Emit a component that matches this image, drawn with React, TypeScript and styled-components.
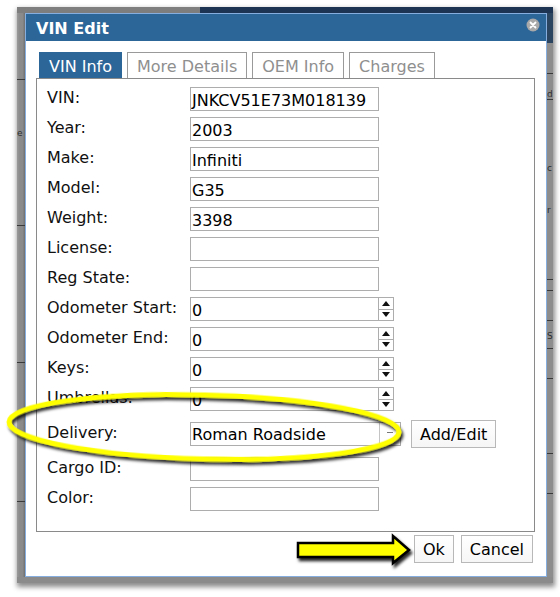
import React from "react";
import styled, { createGlobalStyle } from "styled-components";

const GlobalStyle = createGlobalStyle`
  html, body {
    margin: 0;
    padding: 0;
    background: #fff;
  }
  body {
    font-family: "DejaVu Sans", Verdana, sans-serif;
  }
`;

const Canvas = styled.div`
  position: relative;
  width: 560px;
  height: 597px;
  overflow: hidden;
  padding: 7px 0 0 17px;
  box-sizing: border-box;
`;

// the screenshot of the page behind the dialog (greyed by the modal overlay)
const Shot = styled.div`
  width: 536px;
  height: 576px;
  background: #8b8b8b;
  box-shadow: 1px 3px 5px 1px rgba(0, 0, 0, 0.45);
  display: grid;
  grid-template-columns: 8px 1fr 6px;
  grid-template-rows: 6px 1fr 6px;
`;

const TopStrip = styled.div`
  grid-column: 1 / 4;
  display: flex;
  background: #1d3552;
`;

const TopGrey = styled.div`
  width: 183px;
  background: #7e7e7e;
`;

const SideStrip = styled.div<{ $side: "left" | "right" }>`
  position: relative;
  background: ${(p) =>
    p.$side === "left"
      ? "linear-gradient(to right, #9a9a9a, #8c8c8c 30%, #8a8a8a 70%, #707070)"
      : "linear-gradient(to bottom, #2b4460 0, #2b4460 30px, #8d8d8d 30px)"};
  overflow: hidden;
`;

const Tick = styled.div<{ $top: number }>`
  position: absolute;
  left: 0;
  right: 0;
  top: ${(p) => p.$top}px;
  height: 1px;
  background: #3a3a3a;
`;

const Frag = styled.span<{ $top: number }>`
  position: absolute;
  top: ${(p) => p.$top}px;
  left: 0;
  font-size: 9px;
  line-height: 10px;
  color: #2e2e2e;
`;

const Dialog = styled.div`
  border: 1px solid #86aede;
  background: #fff;
  display: flex;
  flex-direction: column;
  min-height: 0;
`;

const TitleBar = styled.div`
  height: 27px;
  background: #2c6598;
  display: flex;
  align-items: center;
  justify-content: space-between;
  padding: 0 6px 0 10px;
`;

const Title = styled.span`
  color: #fff;
  font-weight: bold;
  font-size: 16px;
  padding-top: 2px;
`;

const CloseBtn = styled.span`
  display: flex;
  width: 14px;
  height: 14px;
  margin-top: -6px;
`;

const Body = styled.div`
  padding: 11px 11px 0 10px;
  display: flex;
  flex-direction: column;
`;

const Tabs = styled.div`
  display: flex;
  gap: 5px;
  padding-left: 3px;
  height: 26px;
`;

const Tab = styled.div<{ $active?: boolean }>`
  display: flex;
  align-items: center;
  padding: 2px 9px 0;
  font-size: 16px;
  border: 1px solid ${(p) => (p.$active ? "#2c6598" : "#9a9a9a")};
  border-bottom: none;
  background: ${(p) => (p.$active ? "#2c6598" : "#fff")};
  color: ${(p) => (p.$active ? "#fff" : "#8f8f8f")};
`;

const Panel = styled.div`
  border: 1px solid #8a8a8a;
  padding: 5px 10px 17px;
  display: flex;
  flex-direction: column;
`;

const Row = styled.div<{ $tall?: boolean }>`
  display: flex;
  align-items: center;
  height: ${(p) => (p.$tall ? 40 : 30)}px;
`;

const Label = styled.span`
  width: 143px;
  font-size: 16px;
  color: #111;
  padding-bottom: 3px;
`;

const TextBox = styled.div`
  box-sizing: border-box;
  width: 189px;
  height: 24px;
  border: 1px solid #adadad;
  padding: 3px 1px 0;
  font-size: 16px;
  line-height: 19px;
  color: #000;
  white-space: nowrap;
  overflow: hidden;
`;

const SpinBox = styled.div`
  box-sizing: border-box;
  width: 204px;
  height: 24px;
  border: 1px solid #adadad;
  display: flex;
`;

const SpinValue = styled.div`
  flex: 1;
  padding: 3px 1px 0;
  font-size: 16px;
  line-height: 19px;
  color: #000;
`;

const SpinCol = styled.div`
  width: 14px;
  border-left: 1px solid #adadad;
  display: flex;
  flex-direction: column;
`;

const SpinBtn = styled.div<{ $down?: boolean }>`
  flex: 1;
  display: flex;
  align-items: center;
  justify-content: center;
  border-top: ${(p) => (p.$down ? "1px solid #adadad" : "none")};

  &::after {
    content: "";
    width: 0;
    height: 0;
    border-left: 4px solid transparent;
    border-right: 4px solid transparent;
    ${(p) =>
      p.$down
        ? "border-top: 5px solid #111;"
        : "border-bottom: 5px solid #111;"}
  }
`;

const SelectBox = styled.div`
  box-sizing: border-box;
  width: 211px;
  height: 24px;
  border: 1px solid #adadad;
  display: flex;
`;

const SelectValue = styled.div`
  flex: 1;
  padding: 1px 1px 0;
  font-size: 16px;
  line-height: 21px;
  color: #000;
`;

const SelectArrow = styled.div`
  width: 20px;
  border-left: 1px solid #c4c4c4;
  display: flex;
  align-items: center;
  justify-content: center;

  &::after {
    content: "";
    width: 6px;
    height: 1px;
    margin-top: -4px;
    background: #777;
  }
`;

const Button = styled.button<{ $gap?: number }>`
  box-sizing: border-box;
  height: 28px;
  margin-left: ${(p) => p.$gap ?? 0}px;
  padding: 0 8px;
  border: 1px solid #b8b8b8;
  background: linear-gradient(#fff, #f6f6f6);
  font-family: inherit;
  font-size: 16px;
  color: #000;
  border-radius: 0;
`;

const Footer = styled.div`
  display: flex;
  justify-content: flex-end;
  gap: 7px;
  padding: 3px 2px 0 0;
`;

const Annotations = styled.svg`
  position: absolute;
  left: 0;
  top: 0;
  pointer-events: none;
`;

const plainFields: [string, string][] = [
  ["VIN:", "JNKCV51E73M018139"],
  ["Year:", "2003"],
  ["Make:", "Infiniti"],
  ["Model:", "G35"],
  ["Weight:", "3398"],
  ["License:", ""],
  ["Reg State:", ""],
];

const spinFields = ["Odometer Start:", "Odometer End:", "Keys:", "Umbrellas:"];

const CloseIcon = () => (
  <svg width="14" height="14" viewBox="0 0 14 14">
    <circle cx="7" cy="7" r="6.5" fill="#a9a9a9" />
    <path d="M4.5 4.5 L9.5 9.5 M9.5 4.5 L4.5 9.5" stroke="#fff" strokeWidth="1.8" strokeLinecap="round" />
  </svg>
);

export default function App() {
  return (
    <>
      <GlobalStyle />
      <Canvas>
        <Shot>
          <TopStrip>
            <TopGrey />
          </TopStrip>
          <SideStrip $side="left">
            <Tick $top={66} />
            <Frag $top={115}>e</Frag>
            <Tick $top={212} />
            <Tick $top={349} />
            <Tick $top={488} />
          </SideStrip>
          <Dialog>
            <TitleBar>
              <Title>VIN Edit</Title>
              <CloseBtn>
                <CloseIcon />
              </CloseBtn>
            </TitleBar>
            <Body>
              <Tabs>
                <Tab $active>VIN Info</Tab>
                <Tab>More Details</Tab>
                <Tab>OEM Info</Tab>
                <Tab>Charges</Tab>
              </Tabs>
              <Panel>
                {plainFields.map(([label, value]) => (
                  <Row key={label}>
                    <Label>{label}</Label>
                    <TextBox>{value}</TextBox>
                  </Row>
                ))}
                {spinFields.map((label) => (
                  <Row key={label}>
                    <Label>{label}</Label>
                    <SpinBox>
                      <SpinValue>0</SpinValue>
                      <SpinCol>
                        <SpinBtn />
                        <SpinBtn $down />
                      </SpinCol>
                    </SpinBox>
                  </Row>
                ))}
                <Row $tall>
                  <Label>Delivery:</Label>
                  <SelectBox>
                    <SelectValue>Roman Roadside</SelectValue>
                    <SelectArrow />
                  </SelectBox>
                  <Button $gap={10}>Add/Edit</Button>
                </Row>
                <Row>
                  <Label>Cargo ID:</Label>
                  <TextBox />
                </Row>
                <Row>
                  <Label>Color:</Label>
                  <TextBox />
                </Row>
              </Panel>
              <Footer>
                <Button>Ok</Button>
                <Button>Cancel</Button>
              </Footer>
            </Body>
          </Dialog>
          <SideStrip $side="right">
            <Tick $top={60} />
            <Frag $top={76}>d</Frag>
            <Tick $top={86} />
            <Frag $top={150}>c</Frag>
            <Frag $top={192}>r</Frag>
            <Tick $top={266} />
            <Tick $top={277} />
            <Tick $top={307} />
            <Frag $top={318}>S</Frag>
            <Tick $top={335} />
            <Tick $top={365} />
            <Tick $top={440} />
            <Tick $top={480} />
          </SideStrip>
          <div />
        </Shot>
        <Annotations width="560" height="597" viewBox="0 0 560 597">
          <defs>
            <filter id="shade" x="-20%" y="-40%" width="140%" height="180%">
              <feDropShadow dx="2" dy="3" stdDeviation="1.8" floodColor="#000" floodOpacity="0.85" />
            </filter>
          </defs>
          <ellipse
            cx="204"
            cy="427"
            rx="195"
            ry="32"
            transform="rotate(1.5 204 427)"
            fill="none"
            stroke="#ffff00"
            strokeWidth="5"
            filter="url(#shade)"
          />
          <path
            d="M298 543 L393 543 L393 536 L409 550 L393 563 L393 557 L298 557 Z"
            fill="#ffff00"
            stroke="#000"
            strokeWidth="2.5"
            strokeLinejoin="miter"
            filter="url(#shade)"
          />
        </Annotations>
      </Canvas>
    </>
  );
}
